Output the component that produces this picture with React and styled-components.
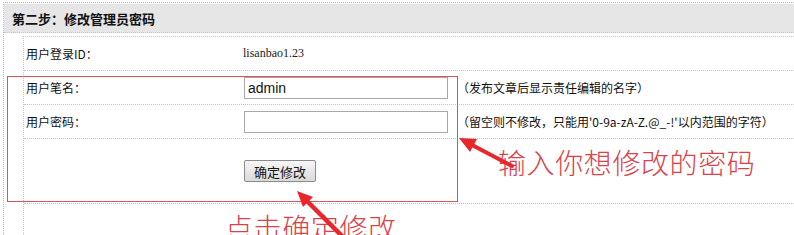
import React from "react";
import styled, { createGlobalStyle } from "styled-components";

const Global = createGlobalStyle`
  html, body { margin: 0; padding: 0; background: #fff; }
  body {
    font-family: "Noto Sans CJK SC", "Liberation Sans", sans-serif;
    font-size: 12px;
    color: #111;
    overflow: hidden;
  }
`;

const Page = styled.div`
  position: relative;
  width: 794px;
  height: 235px;
  overflow: hidden;
`;

const Panel = styled.div`
  margin: 2px 0 0 3px;
  height: 240px;
  border-top: 1px dotted #b8b8b8;
  border-left: 1px dotted #b8b8b8;
`;

const Header = styled.div`
  margin-top: 1px;
  height: 28px;
  display: flex;
  align-items: center;
  padding-left: 8px;
  background: #e6e6e6;
  border-bottom: 1px dotted #c4c4c4;
  font-size: 13px;
  font-weight: 700;
  color: #111;
`;

const Table = styled.div`
  margin: 3px 0 0 19px;
  border-top: 1px dotted #c4c4c4;
  border-left: 1px dotted #c4c4c4;
  height: 200px;
`;

const Row = styled.div`
  display: grid;
  grid-template-columns: 220px 1fr;
  align-items: center;
  height: ${(p) => p.$h}px;
  border-bottom: 1px dotted #c4c4c4;
`;

const Label = styled.div`
  padding-left: 2px;
  font-size: 12px;
  color: #111;
`;

const Value = styled.div`
  display: flex;
  align-items: center;
  gap: 9px;
`;

const SerifText = styled.span`
  font-family: "Liberation Serif", serif;
  font-size: 12px;
  color: #222;
  margin-left: -1px;
`;

const Input = styled.input`
  box-sizing: border-box;
  width: 204px;
  height: 22px;
  margin: 0;
  padding: 0 3px;
  border: 1px solid #a8a8a8;
  font-family: "Liberation Sans", sans-serif;
  font-size: 14px;
  color: #111;
  outline: none;
`;

const Note = styled.span`
  font-size: 12px;
  color: #111;
  white-space: nowrap;
`;

const Button = styled.button`
  box-sizing: border-box;
  width: 72px;
  height: 22px;
  margin: 0;
  padding: 0;
  border: 1px solid #8a8a8a;
  border-radius: 2px;
  background: linear-gradient(#f6f6f6, #dadada);
  font-family: "Noto Sans CJK SC", sans-serif;
  font-size: 13px;
  color: #111;
`;

const RedBox = styled.div`
  position: absolute;
  left: 7px;
  top: 76px;
  width: 451px;
  height: 126px;
  box-sizing: border-box;
  border: 1px solid #d9535a;
  pointer-events: none;
`;

const Callout = styled.div`
  position: absolute;
  left: ${(p) => p.$x}px;
  top: ${(p) => p.$y}px;
  font-family: "Noto Sans CJK SC", sans-serif;
  font-weight: 300;
  font-size: 28px;
  letter-spacing: 0.6px;
  line-height: 1;
  color: #d8434b;
  white-space: nowrap;
`;

const Arrows = styled.svg`
  position: absolute;
  left: 0;
  top: 0;
  pointer-events: none;
`;

export default function App() {
  return (
    <Page>
      <Global />
      <Panel>
        <Header>第二步：修改管理员密码</Header>
        <Table>
          <Row $h={33}>
            <Label>用户登录ID：</Label>
            <Value>
              <SerifText>lisanbao1.23</SerifText>
            </Value>
          </Row>
          <Row $h={33}>
            <Label>用户笔名：</Label>
            <Value>
              <Input defaultValue="admin" />
              <Note>（发布文章后显示责任编辑的名字）</Note>
            </Value>
          </Row>
          <Row $h={33}>
            <Label>用户密码：</Label>
            <Value>
              <Input type="password" />
              <Note>（留空则不修改，只能用'0-9a-zA-Z.@_-!'以内范围的字符）</Note>
            </Value>
          </Row>
          <Row $h={64}>
            <Label />
            <Value>
              <Button>确定修改</Button>
            </Value>
          </Row>
        </Table>
      </Panel>
      <RedBox />
      <Callout $x={498} $y={148}>输入你想修改的密码</Callout>
      <Callout $x={225} $y={213}>点击确定修改</Callout>
      <Arrows width="794" height="235" viewBox="0 0 794 235">
        <line x1="472" y1="145" x2="512" y2="166" stroke="#e8262b" strokeWidth="4" strokeLinecap="round" />
        <polygon points="459,138 470,152 477,139" fill="#e8262b" />
        <line x1="307" y1="201" x2="346" y2="240" stroke="#e8262b" strokeWidth="4.5" strokeLinecap="round" />
        <polygon points="297,191 303,207 313,197" fill="#e8262b" />
      </Arrows>
    </Page>
  );
}
